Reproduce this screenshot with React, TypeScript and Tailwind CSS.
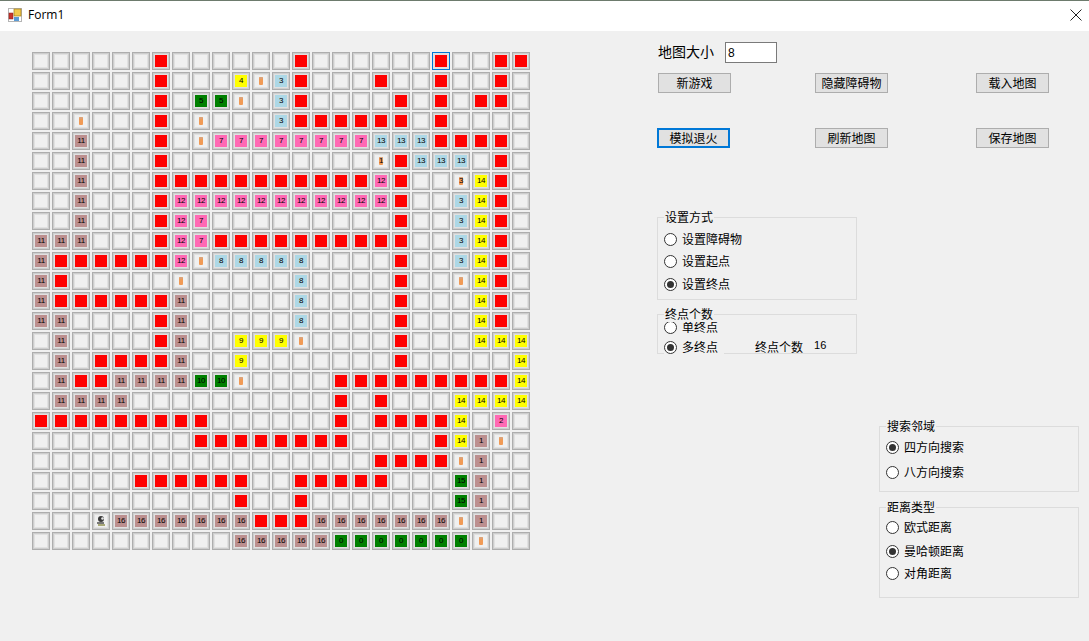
import React from "react";

// 25x25 map: . empty, # wall, o walker, oN walker with a number on it, p start
const MAP = [
  ". . . . . . # . . . . . . # . . . . . . # . . # #",
  ". . . . . . # . . . 4 o 3 # . . . # . . # . . # .",
  ". . . . . . # . 5 5 o . 3 # . . . . # . # . # # .",
  ". . o . . . # . o . . . 3 # # # # # # . # . . . .",
  ". . 11 . . . # . o 7 7 7 7 7 7 7 7 13 13 13 # # # # .",
  ". . 11 . . . # . . . . . . . . . . o1 # 13 13 13 . # .",
  ". . 11 . . . # # # # # # # # # # # 12 # . . o3 14 # .",
  ". . 11 . . . # 12 12 12 12 12 12 12 12 12 12 12 # . . 3 14 # .",
  ". . 11 . . . # 12 7 . . . . . . . . . # . . 3 14 # .",
  "11 11 11 . . . # 12 7 # # # # # # # # # # . . 3 14 # .",
  "11 # # # # # # 12 o 8 8 8 8 8 . . . . # . . 3 14 # .",
  "11 # . . . . . o . . . . . 8 . . . . # . . o 14 # .",
  "11 # # # # # # 11 . . . . . 8 . . . . # . . . 14 # .",
  "11 11 . . . . # 11 . . . . . 8 . . . . # . . . 14 # .",
  ". 11 . . . . # 11 . . 9 9 9 o . . . . # . . . 14 14 14",
  ". 11 . # # # # 11 . . 9 . . . . . . . # . . . . . 14",
  ". 11 # # 11 11 11 11 10 10 o . . . . # # # # # # # # # 14",
  ". 11 11 11 11 . . . . . . . . . . # . # . . . 14 14 14 14",
  "# # # # # # # # # . . . . . . # . # # # # 14 . 2 .",
  ". . . . . . . . # # # # # # # # . . . . # 14 1 o .",
  ". . . . . . . . . . . . . . . . . # # # # o 1 . .",
  ". . . . . # # # # # # . . # # # # # . . . 15 1 . .",
  ". . . . . . . . . . # . . # . . . . . . . 15 1 . .",
  ". . . p 16 16 16 16 16 16 16 # # # 16 16 16 16 16 16 16 o 1 . .",
  ". . . . . . . . . . 16 16 16 16 16 0 0 0 0 0 0 0 o . .",
].map((row) => row.split(" "));

const COST_COLORS = ["bg-[#008000]", "bg-[#bc8f8f]", "bg-[#ff69b4]", "bg-[#add8e6]", "bg-[#ffff00]"];

const Walker = () => (
  <svg width="6" height="10" viewBox="0 0 6 10" className="absolute left-[3px] top-px">
    <rect x="1" y="1" width="4" height="8" rx="1" fill="#f09a55" />
    <rect x="1.5" y="1" width="3" height="2" fill="#d9a27a" />
  </svg>
);

const Person = () => (
  <svg width="12" height="12" viewBox="0 0 12 12">
    <circle cx="6" cy="4" r="3" fill="#3a3a3a" />
    <circle cx="7.5" cy="3.5" r="1.3" fill="#e8e8e8" />
    <rect x="2" y="7" width="7" height="2" fill="#777" />
    <rect x="3" y="9" width="7" height="2" fill="#a8a878" />
  </svg>
);

const Cell = ({ value, focused }: { value: string; focused: boolean }) => {
  let inner: React.ReactNode = null;
  let fill = "bg-[#f0f0f0]";
  if (value === "#") {
    fill = "bg-[#ff0000]";
  } else if (value === "p") {
    inner = <Person />;
  } else if (value[0] === "o") {
    inner = (
      <>
        <Walker />
        {value.length > 1 && <span className="relative">{value.slice(1)}</span>}
      </>
    );
  } else if (value !== ".") {
    fill = COST_COLORS[Number(value) % 5];
    inner = value;
  }
  return (
    <div
      className={`w-[18px] h-[18px] flex items-center justify-center bg-[#e1e1e1] border ${
        focused ? "border-[#0078d7]" : "border-[#adadad] shadow-[inset_0_0_0_1px_#cdcdcd]"
      }`}
    >
      <div
        className={`relative w-3 h-3 flex items-center justify-center text-[8px] leading-none text-black tracking-[-0.5px] ${fill}`}
      >
        {inner}
      </div>
    </div>
  );
};

const Btn = ({ label, focused = false, className = "" }: { label: string; focused?: boolean; className?: string }) => (
  <button
    className={`w-[73px] h-[20px] bg-[#e1e1e1] text-xs leading-none text-black ${
      focused ? "border-2 border-[#0078d7]" : "border border-[#adadad]"
    } ${className}`}
  >
    {label}
  </button>
);

const Radio = ({ label, checked = false, className = "" }: { label: string; checked?: boolean; className?: string }) => (
  <div className={`flex items-center h-[20px] text-xs text-black ${className}`}>
    <span className="w-[13px] h-[13px] rounded-full border border-[#333] bg-white flex items-center justify-center">
      {checked && <span className="w-[7px] h-[7px] rounded-full bg-[#333]" />}
    </span>
    <span className="ml-[5px]">{label}</span>
  </div>
);

const Group = ({ title, className, children }: { title: string; className: string; children: React.ReactNode }) => (
  <div className={`relative w-[200px] border border-[#dcdcdc] px-[6px] ${className}`}>
    <span className="absolute -top-[9px] left-[6px] px-px bg-[#f0f0f0] text-xs leading-[16px] text-black">{title}</span>
    {children}
  </div>
);

export default function App() {
  return (
    <div className="w-[1089px] h-[641px] bg-[#f0f0f0] overflow-hidden font-['Noto_Sans_CJK_SC','Noto_Sans',sans-serif]">
      <div className="h-[31px] bg-white border-t border-[#6d7b6d] flex items-center pl-[8px] pb-[2px]">
        <svg width="14" height="14" viewBox="0 0 14 14">
          <rect x="0.5" y="0.5" width="13" height="13" fill="#fff" stroke="#b5b5b5" />
          <rect x="1" y="5" width="4" height="6" fill="#c8342c" stroke="#8a1f1a" strokeWidth="0.5" />
          <rect x="6" y="1" width="7" height="7" fill="#f2c94c" stroke="#a07d18" strokeWidth="0.7" />
          <rect x="6" y="9" width="5" height="4" fill="#5b9bd5" />
        </svg>
        <span className="ml-[6px] text-xs text-black font-['Open_Sans',sans-serif]">Form1</span>
        <svg width="12" height="12" viewBox="0 0 12 12" className="ml-auto mr-[7px]" stroke="#222" strokeWidth="1">
          <path d="M0.5 0.5 L11.5 11.5 M11.5 0.5 L0.5 11.5" />
        </svg>
      </div>

      <div className="flex">
        <div className="pl-[32px] pt-[21px] font-['Liberation_Sans',sans-serif]">
          <div className="grid grid-cols-[repeat(25,18px)] gap-[2px]">
            {MAP.map((row, r) =>
              row.map((value, c) => <Cell key={`${r}-${c}`} value={value} focused={r === 0 && c === 20} />)
            )}
          </div>
        </div>

        <div className="ml-[127px] w-[432px]">
          <div className="mt-[11px] flex items-center h-[21px] pl-px">
            <span className="w-[67px] pb-[3px] text-sm leading-none text-black">地图大小</span>
            <input
              readOnly
              value="8"
              className="w-[52px] h-[21px] bg-white border border-[#7a7a7a] pl-[2px] text-xs text-black font-['Liberation_Sans',sans-serif] outline-none"
            />
          </div>

          <div className="mt-[10px] pl-px flex">
            <Btn label="新游戏" />
            <Btn label="隐藏障碍物" className="ml-[84px]" />
            <Btn label="载入地图" className="ml-[88px]" />
          </div>

          <div className="mt-[35px] flex">
            <Btn label="模拟退火" focused />
            <Btn label="刷新地图" className="ml-[85px]" />
            <Btn label="保存地图" className="ml-[88px]" />
          </div>

          <Group title="设置方式" className="mt-[69px] h-[83px] pt-[11px]">
            <Radio label="设置障碍物" />
            <Radio label="设置起点" className="mt-[2px]" />
            <Radio label="设置终点" checked className="mt-[3px]" />
          </Group>

          <Group title="终点个数" className="mt-[14px] h-[40px] pt-[2px]">
            <Radio label="单终点" />
            <div className="flex items-center">
              <Radio label="多终点" checked className="bg-[#f0f0f0] w-[60px]" />
              <span className="ml-[31px] pb-px text-xs text-black">终点个数</span>
              <span className="ml-[11px] pb-[3px] text-[11px] text-black font-['Liberation_Sans',sans-serif]">16</span>
            </div>
          </Group>

          <div className="ml-[222px]">
            <Group title="搜索邻域" className="mt-[72px] h-[66px] pt-[10px]">
              <Radio label="四方向搜索" checked />
              <Radio label="八方向搜索" className="mt-[5px]" />
            </Group>

            <Group title="距离类型" className="mt-[15px] h-[91px] pt-[9px]">
              <Radio label="欧式距离" />
              <Radio label="曼哈顿距离" checked className="mt-[4px]" />
              <Radio label="对角距离" className="mt-[2px]" />
            </Group>
          </div>
        </div>
      </div>
    </div>
  );
}
